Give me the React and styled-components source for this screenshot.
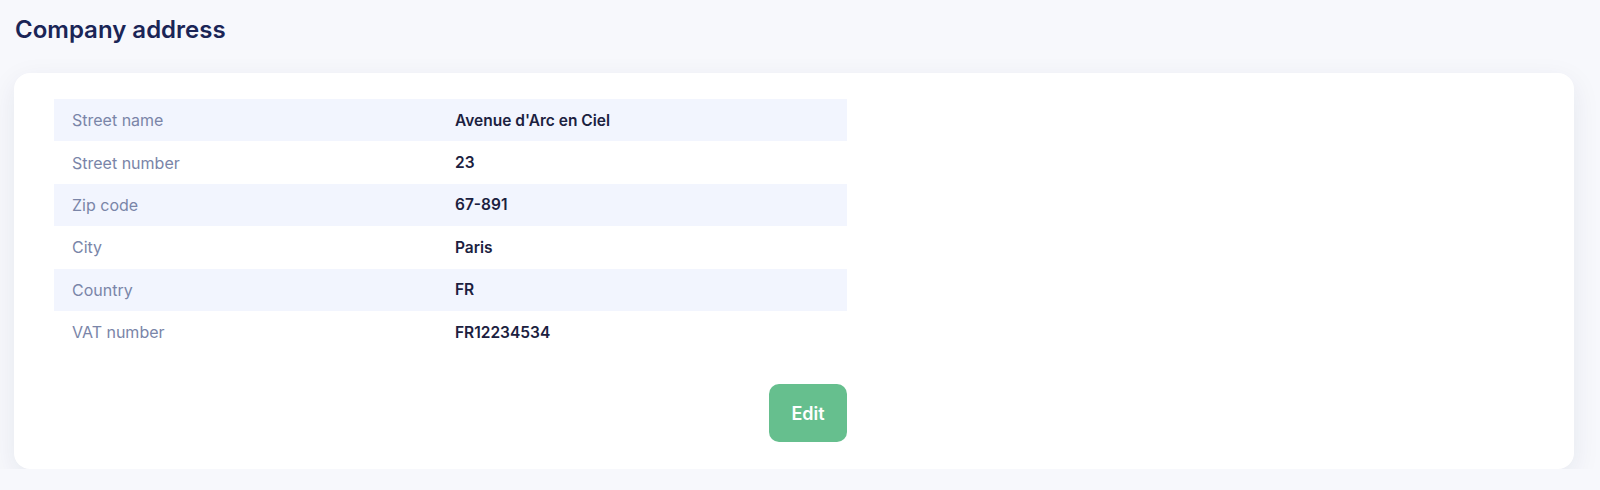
import styled, { createGlobalStyle } from "styled-components";

const GlobalStyle = createGlobalStyle`
  body {
    margin: 0;
    background: #f7f8fc;
    font-family: Inter, "Noto Sans", sans-serif;
  }
`;

const address = [
  { label: "Street name", value: "Avenue d'Arc en Ciel" },
  { label: "Street number", value: "23" },
  { label: "Zip code", value: "67-891" },
  { label: "City", value: "Paris" },
  { label: "Country", value: "FR" },
  { label: "VAT number", value: "FR12234534" },
];

const App = () => {
  return (
    <Page>
      <GlobalStyle />
      <Title>Company address</Title>
      <Card>
        <Content>
          <Table>
            {address.map((item, i) => (
              <Row key={item.label} $striped={i % 2 === 0}>
                <Label>{item.label}</Label>
                <Value>{item.value}</Value>
              </Row>
            ))}
          </Table>
          <EditButton>Edit</EditButton>
        </Content>
      </Card>
    </Page>
  );
};

export default App;

const Page = styled.div`
  padding: 16px 26px 0 14px;
`;

const Title = styled.h1`
  margin: 0 0 29px 1px;
  font-size: 24px;
  line-height: 28px;
  font-weight: 600;
  color: #1a2556;
`;

const Card = styled.div`
  background: #ffffff;
  border-radius: 16px;
  padding: 26px 40px 27px;
  box-shadow: 0 8px 28px rgba(30, 40, 80, 0.08);
`;

const Content = styled.div`
  width: 793px;
  display: flex;
  flex-direction: column;
`;

const Table = styled.div`
  display: flex;
  flex-direction: column;
`;

const Row = styled.div`
  display: grid;
  grid-template-columns: 383px 1fr;
  align-items: center;
  height: 42.4px;
  padding-left: 18px;
  background: ${(p) => (p.$striped ? "#f2f5fe" : "transparent")};
`;

const Label = styled.span`
  font-size: 16px;
  color: #7a85a8;
`;

const Value = styled.span`
  font-size: 15.5px;
  font-weight: 600;
  color: #1b2140;
`;

const EditButton = styled.button`
  align-self: flex-end;
  margin-top: 31px;
  width: 78px;
  height: 58px;
  border: none;
  border-radius: 10px;
  background: #66bf8e;
  color: #ffffff;
  font-family: Inter, sans-serif;
  font-size: 18px;
  font-weight: 600;
  cursor: pointer;
`;
